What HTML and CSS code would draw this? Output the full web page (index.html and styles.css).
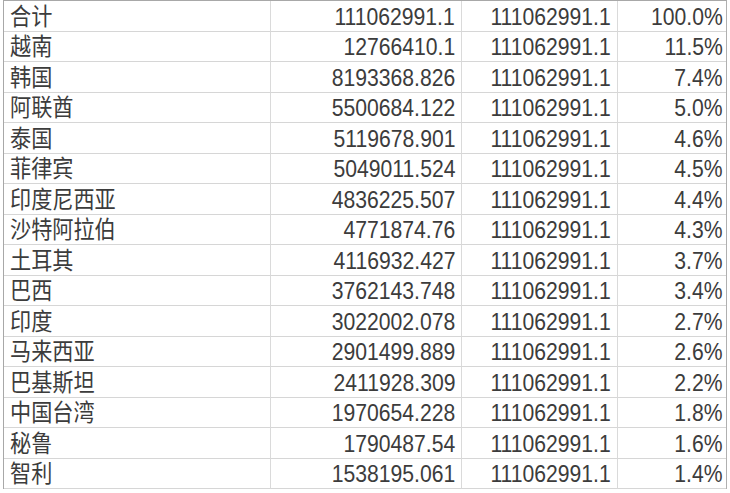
FILE: index.html
```html
<!DOCTYPE html>
<html lang="zh">
<head>
<meta charset="utf-8">
<link rel="stylesheet" href="styles.css">
</head>
<body>
<div class="sheet">
  <div class="grid">
    <div class="c name"><span>合计</span></div><div class="c num"><span>111062991.1</span></div><div class="c num"><span>111062991.1</span></div><div class="c pct"><span>100.0%</span></div>
    <div class="c name"><span>越南</span></div><div class="c num"><span>12766410.1</span></div><div class="c num"><span>111062991.1</span></div><div class="c pct"><span>11.5%</span></div>
    <div class="c name"><span>韩国</span></div><div class="c num"><span>8193368.826</span></div><div class="c num"><span>111062991.1</span></div><div class="c pct"><span>7.4%</span></div>
    <div class="c name"><span>阿联酋</span></div><div class="c num"><span>5500684.122</span></div><div class="c num"><span>111062991.1</span></div><div class="c pct"><span>5.0%</span></div>
    <div class="c name"><span>泰国</span></div><div class="c num"><span>5119678.901</span></div><div class="c num"><span>111062991.1</span></div><div class="c pct"><span>4.6%</span></div>
    <div class="c name"><span>菲律宾</span></div><div class="c num"><span>5049011.524</span></div><div class="c num"><span>111062991.1</span></div><div class="c pct"><span>4.5%</span></div>
    <div class="c name"><span>印度尼西亚</span></div><div class="c num"><span>4836225.507</span></div><div class="c num"><span>111062991.1</span></div><div class="c pct"><span>4.4%</span></div>
    <div class="c name"><span>沙特阿拉伯</span></div><div class="c num"><span>4771874.76</span></div><div class="c num"><span>111062991.1</span></div><div class="c pct"><span>4.3%</span></div>
    <div class="c name"><span>土耳其</span></div><div class="c num"><span>4116932.427</span></div><div class="c num"><span>111062991.1</span></div><div class="c pct"><span>3.7%</span></div>
    <div class="c name"><span>巴西</span></div><div class="c num"><span>3762143.748</span></div><div class="c num"><span>111062991.1</span></div><div class="c pct"><span>3.4%</span></div>
    <div class="c name"><span>印度</span></div><div class="c num"><span>3022002.078</span></div><div class="c num"><span>111062991.1</span></div><div class="c pct"><span>2.7%</span></div>
    <div class="c name"><span>马来西亚</span></div><div class="c num"><span>2901499.889</span></div><div class="c num"><span>111062991.1</span></div><div class="c pct"><span>2.6%</span></div>
    <div class="c name"><span>巴基斯坦</span></div><div class="c num"><span>2411928.309</span></div><div class="c num"><span>111062991.1</span></div><div class="c pct"><span>2.2%</span></div>
    <div class="c name"><span>中国台湾</span></div><div class="c num"><span>1970654.228</span></div><div class="c num"><span>111062991.1</span></div><div class="c pct"><span>1.8%</span></div>
    <div class="c name"><span>秘鲁</span></div><div class="c num"><span>1790487.54</span></div><div class="c num"><span>111062991.1</span></div><div class="c pct"><span>1.6%</span></div>
    <div class="c name"><span>智利</span></div><div class="c num"><span>1538195.061</span></div><div class="c num"><span>111062991.1</span></div><div class="c pct"><span>1.4%</span></div>
  </div>
</div>
</body>
</html>
```

FILE: styles.css
```css
html, body {
  margin: 0;
  padding: 0;
  background: #ffffff;
}
.sheet {
  padding: 0 0 0 3px;
}
.grid {
  display: grid;
  grid-template-columns: 267px 191px 156px 108px;
  grid-auto-rows: 30.5px;
  width: 722px;
  border-top: 1px solid #a8a8a8;
  border-left: 1px solid #a8a8a8;
  border-right: 1px solid #b0b0b0;
  box-sizing: content-box;
  font-family: "Liberation Sans", "Noto Sans CJK SC", sans-serif;
  font-size: 23.5px;
  color: #3c3c3c;
}
.c {
  border-right: 1px solid #dadada;
  border-bottom: 1px solid #d6d6d6;
  display: flex;
  align-items: center;
  padding: 3px 6px 0;
  white-space: nowrap;
  overflow: visible;
  line-height: 1;
}
.c span {
  display: inline-block;
  transform: scaleX(0.9);
}
.c.pct {
  border-right: none;
  padding-right: 3px;
}
.name {
  justify-content: flex-start;
  padding-left: 6px;
}
.name span {
  transform-origin: left center;
}
.num, .pct {
  justify-content: flex-end;
}
.num span, .pct span {
  transform-origin: right center;
}
```
